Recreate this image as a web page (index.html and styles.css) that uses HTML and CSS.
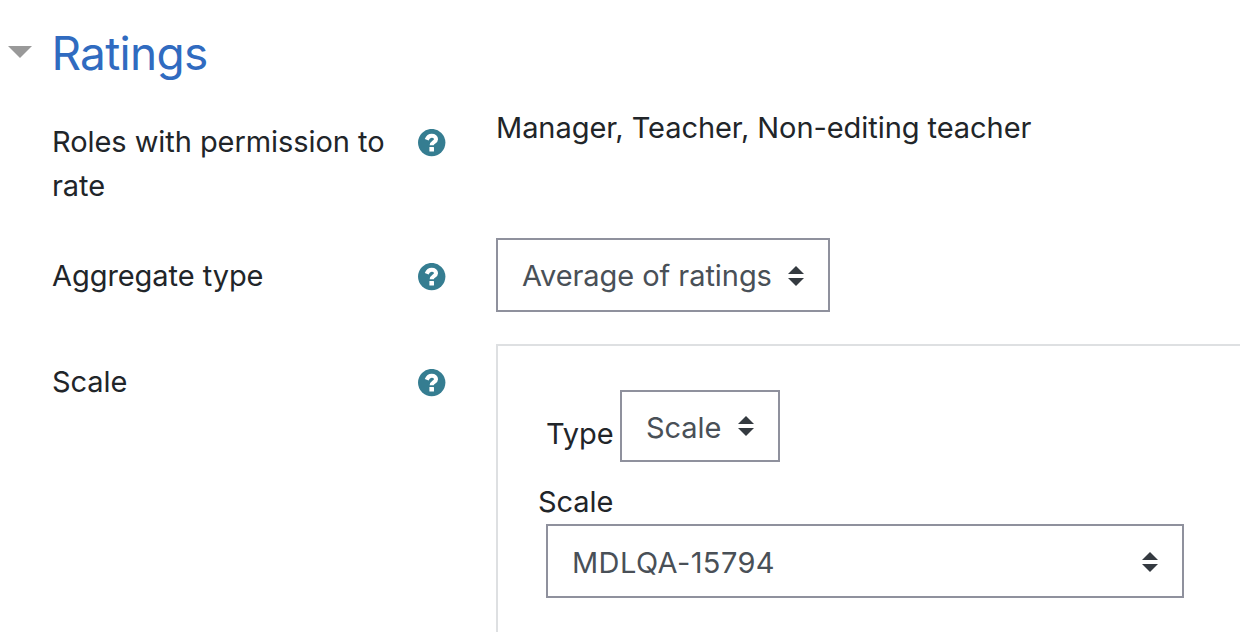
FILE: index.html
```html
<!DOCTYPE html>
<html lang="en">
<head>
<meta charset="utf-8">
<title>Ratings</title>
<link rel="stylesheet" href="styles.css">
</head>
<body>
<svg class="defs" width="0" height="0">
	<symbol id="help" viewBox="0 0 28 28">
		<circle cx="13.700" cy="13.600" r="13.700" fill="#357d91"/>
		<path d="M8.700 10.800C9.800 7.900 11.500 6.700 13.700 6.700c2.700 0 4.300 1.500 4.300 3.500 0 3-4.300 2.900-4.300 6" fill="none" stroke="#fff" stroke-width="4.100"/>
		<rect x="11.400" y="18" width="4.600" height="4.500" rx=".5" fill="#fff"/>
	</symbol>
	<symbol id="arrows" viewBox="0 0 16 20">
		<path d="M8 0l8 8H0zM8 20l8-8H0z" fill="#343a40"/>
	</symbol>
</svg>
<fieldset class="ratings">
	<h3><span class="caret"></span><a>Ratings</a></h3>
	<div class="row roles">
		<label><span>Roles with permission to rate</span><svg class="help"><use href="#help"/></svg></label>
		<div class="static">Manager, Teacher, Non-editing teacher</div>
	</div>
	<div class="row aggregate">
		<label><span>Aggregate type</span><svg class="help"><use href="#help"/></svg></label>
		<div class="select"><span>Average of ratings</span><svg class="arrows"><use href="#arrows"/></svg></div>
	</div>
	<div class="row scale">
		<label><span>Scale</span><svg class="help"><use href="#help"/></svg></label>
		<div class="group">
			<div class="type"><span>Type</span><div class="select"><span>Scale</span><svg class="arrows"><use href="#arrows"/></svg></div></div>
			<div class="title">Scale</div>
			<div class="select wide"><span>MDLQA-15794</span><svg class="arrows"><use href="#arrows"/></svg></div>
		</div>
	</div>
</fieldset>
</body>
</html>
```
FILE: styles.css
```css
* {box-sizing:border-box;margin:0;padding:0;}
body {height:632px;overflow:hidden;background:#fff;color:#212529;font:29px/44px Inter, "Liberation Sans", sans-serif;letter-spacing:-0.06px;}
.defs {display:block;height:0;}
.ratings {border:0;padding-top:25px;min-width:0;}
h3 {display:flex;align-items:center;height:56px;font-size:46px;line-height:56px;font-weight:400;letter-spacing:-0.7px;color:#306bc0;}
h3 a {margin-left:-0.6px;}
.caret {width:24px;margin:0 20px 2px 8px;border:12px solid transparent;border-top-color:#999;border-bottom:0;}
.row {display:flex;align-items:flex-start;}
.row label {display:flex;justify-content:space-between;width:394px;margin-left:52px;margin-right:50px;}
.row label span {width:345px;}
.help {width:28px;height:28px;margin-top:9px;flex:none;}
.roles {margin-top:39px;height:118px;}
.static {margin-top:-14px;}
.select {display:flex;align-items:center;border:2px solid #8f919d;color:#495057;padding:2px 24px 0;height:74px;justify-content:space-between;}
.arrows {width:16px;height:20px;}
.aggregate {height:106px;}
.aggregate label, .scale label {margin-top:16px;}
.aggregate .select {width:334px;}
.group {flex:1;height:300px;border:2px solid #dee0e2;border-right:0;padding:44px 0 0 40px;}
.type {display:flex;padding-left:8px;}
.type > span {width:74px;margin-top:22px;}
.type .select {width:160px;height:72px;}
.type .select span {padding-top:1px;}
.type .arrows {margin-bottom:2px;}
.title {margin-top:18px;}
.wide {width:638px;margin-left:8px;letter-spacing:0.4px;}
.wide span {padding-top:2px;}
```
